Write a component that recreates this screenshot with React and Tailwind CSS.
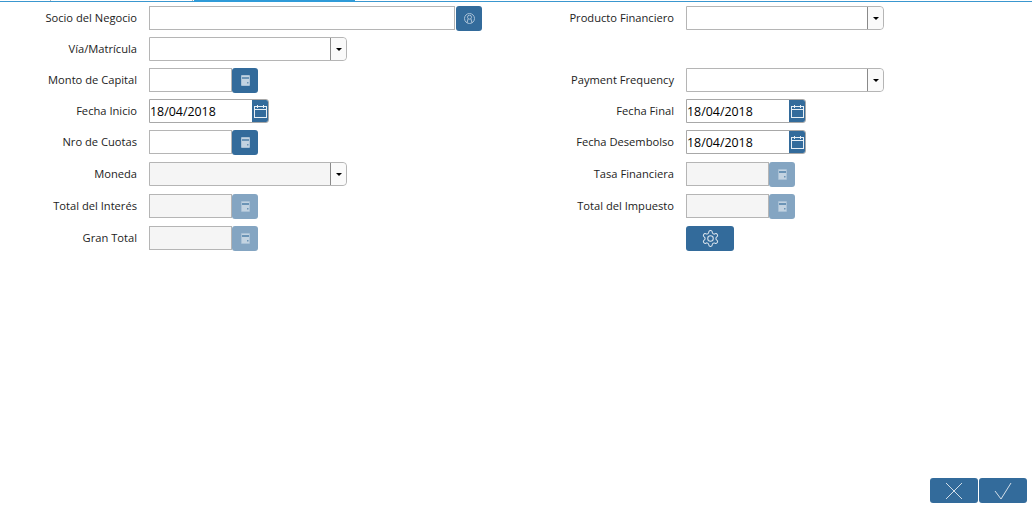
function CalcIcon() {
  return (
    <svg width="9" height="11" viewBox="0 0 9 11">
      <rect x="0" y="0" width="9" height="11" rx="1" fill="#a9c1d6" />
      <rect x="1" y="1" width="7" height="9" fill="#c3d3e1" />
      <rect x="1" y="2" width="7" height="2" fill="#6b94b6" />
      <rect x="6" y="7" width="1.5" height="1.5" fill="#6b94b6" />
    </svg>
  );
}

function UserIcon() {
  return (
    <svg width="11" height="11" viewBox="0 0 11 11" fill="none" stroke="#a9c1d6" strokeWidth="1">
      <circle cx="5.5" cy="5.5" r="5" />
      <circle cx="5.5" cy="4.2" r="2" />
      <path d="M4 6 3 10M7 6l1 4" />
    </svg>
  );
}

function CalendarIcon() {
  return (
    <svg width="13" height="13" viewBox="0 0 13 13" fill="none" stroke="#e8eff5" strokeWidth="1">
      <rect x="0.5" y="1.5" width="12" height="11" />
      <path d="M0.5 4.5h12M3.5 0v3M9.5 0v3" />
    </svg>
  );
}

function GearIcon() {
  return (
    <svg width="19" height="19" viewBox="0 0 24 24" fill="none" stroke="#dbe5ee" strokeWidth="1.3" strokeLinecap="round" strokeLinejoin="round">
      <path d="M12.22 2h-.44a2 2 0 0 0-2 2v.18a2 2 0 0 1-1 1.73l-.43.25a2 2 0 0 1-2 0l-.15-.08a2 2 0 0 0-2.73.73l-.22.38a2 2 0 0 0 .73 2.73l.15.1a2 2 0 0 1 1 1.72v.51a2 2 0 0 1-1 1.74l-.15.09a2 2 0 0 0-.73 2.73l.22.38a2 2 0 0 0 2.73.73l.15-.08a2 2 0 0 1 2 0l.43.25a2 2 0 0 1 1 1.73V20a2 2 0 0 0 2 2h.44a2 2 0 0 0 2-2v-.18a2 2 0 0 1 1-1.73l.43-.25a2 2 0 0 1 2 0l.15.08a2 2 0 0 0 2.73-.73l.22-.39a2 2 0 0 0-.73-2.73l-.15-.08a2 2 0 0 1-1-1.74v-.5a2 2 0 0 1 1-1.74l.15-.09a2 2 0 0 0 .73-2.73l-.22-.38a2 2 0 0 0-2.73-.73l-.15.08a2 2 0 0 1-2 0l-.43-.25a2 2 0 0 1-1-1.73V4a2 2 0 0 0-2-2z" />
      <circle cx="12" cy="12" r="3.5" />
    </svg>
  );
}

function Row({ label, tall, children }) {
  return (
    <div className={`flex items-start gap-3 ${tall ? "h-[32px]" : "h-[31px]"}`}>
      <div className="w-[137px] shrink-0 text-right text-[11.15px] leading-[24px] text-[#222222]">{label}</div>
      {children}
    </div>
  );
}

function SelectBox({ disabled }) {
  return (
    <div className={`flex h-[24px] w-[198px] rounded-r-[4px] border border-[#b5b5b5] ${disabled ? "bg-[#f5f5f5]" : "bg-white"}`}>
      <div className="flex-1" />
      <div className="flex w-[16px] items-center justify-center rounded-r-[4px] border-l border-[#8a8a8a] bg-[#fafafa]">
        <div className="h-0 w-0 border-x-[3.5px] border-t-[3.5px] border-x-transparent border-t-black" />
      </div>
    </div>
  );
}

function CalcField({ disabled }) {
  return (
    <div className="flex items-start">
      <div className={`h-[24px] w-[83px] border border-[#b5b5b5] ${disabled ? "bg-[#f5f5f5]" : "bg-white"}`} />
      <div className={`flex h-[25px] w-[26px] items-center justify-center rounded-[3px] ${disabled ? "bg-[#84a5c2]" : "bg-[#336b9b]"}`}>
        <CalcIcon />
      </div>
    </div>
  );
}

function DateField() {
  return (
    <div className="flex h-[24px] w-[120px] rounded-r-[3px] border border-[#a8a8a8] bg-white">
      <div className="flex-1 text-[12.4px] leading-[23px] text-black">18/04/2018</div>
      <div className="flex w-[16px] items-center justify-center rounded-r-[2px] bg-[#336b9b]">
        <CalendarIcon />
      </div>
    </div>
  );
}

export default function App() {
  return (
    <div className="relative h-[512px] w-[1032px] overflow-hidden bg-white" style={{ fontFamily: '"Open Sans", sans-serif' }}>
      <div className="relative h-[2px] w-full border-b border-[#3a97cf]">
        <div className="absolute left-[50px] top-0 h-px w-px bg-[#b5b5b5]" />
        <div className="absolute left-[192px] top-0 h-px w-px bg-[#b5b5b5]" />
        <div className="absolute left-[194px] top-0 h-[2px] w-[161px] bg-[#2f9bd8]" />
      </div>
      <div className="flex pt-[4px]">
        <div className="w-[537px]">
          <Row label="Socio del Negocio">
            <div className="flex items-start gap-px">
              <div className="h-[24px] w-[306px] border border-[#b5b5b5] bg-white" />
              <div className="flex h-[25px] w-[26px] items-center justify-center rounded-[3px] bg-[#336b9b]">
                <UserIcon />
              </div>
            </div>
          </Row>
          <Row label="Vía/Matrícula"><SelectBox /></Row>
          <Row label="Monto de Capital"><CalcField /></Row>
          <Row label="Fecha Inicio"><DateField /></Row>
          <Row label="Nro de Cuotas" tall><CalcField /></Row>
          <Row label="Moneda" tall><SelectBox disabled /></Row>
          <Row label="Total del Interés" tall><CalcField disabled /></Row>
          <Row label="Gran Total" tall><CalcField disabled /></Row>
        </div>
        <div className="flex-1">
          <Row label="Producto Financiero"><SelectBox /></Row>
          <div className="h-[31px]" />
          <Row label="Payment Frequency"><SelectBox /></Row>
          <Row label="Fecha Final"><DateField /></Row>
          <Row label="Fecha Desembolso" tall><DateField /></Row>
          <Row label="Tasa Financiera" tall><CalcField disabled /></Row>
          <Row label="Total del Impuesto" tall><CalcField disabled /></Row>
          <Row label="" tall>
            <div className="flex h-[25px] w-[48px] items-center justify-center rounded-[3px] bg-[#336b9b]">
              <GearIcon />
            </div>
          </Row>
        </div>
      </div>
      <div className="absolute bottom-[9px] left-[930px] flex gap-[1px]">
        <div className="flex h-[25px] w-[48px] items-center justify-center rounded-[3px] bg-[#336b9b]">
          <svg width="18" height="18" viewBox="0 0 18 18" fill="none" stroke="#d3dfe9" strokeWidth="1"><path d="M1 1l16 16M17 1L1 17" /></svg>
        </div>
        <div className="flex h-[25px] w-[48px] items-center justify-center rounded-[3px] bg-[#336b9b]">
          <svg width="20" height="18" viewBox="0 0 20 18" fill="none" stroke="#d3dfe9" strokeWidth="1"><path d="M2 9l6 8L18 1" /></svg>
        </div>
      </div>
    </div>
  );
}
